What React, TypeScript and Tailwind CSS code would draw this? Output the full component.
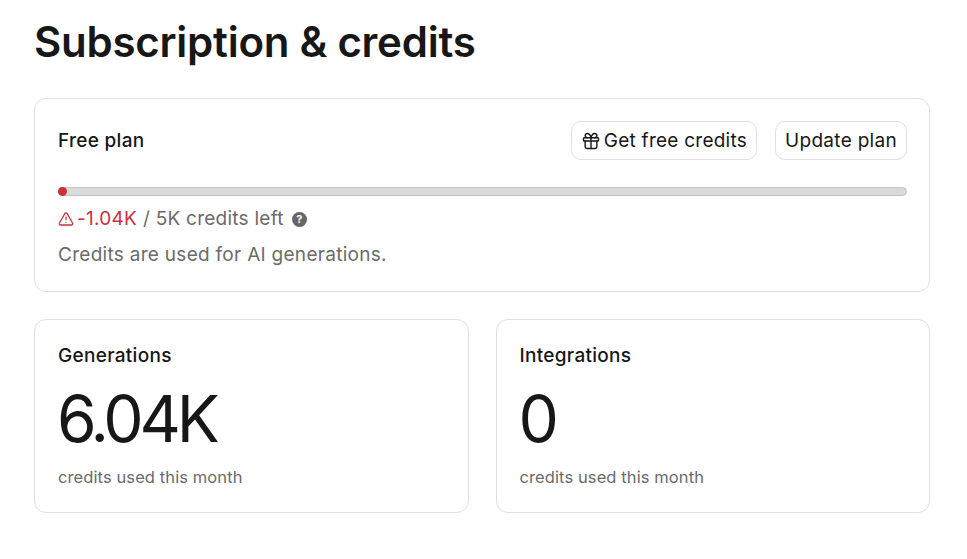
import { Gift, TriangleAlert } from 'lucide-react'

const StatCard = ({ title, value }: { title: string; value: string }) => (
    <div className="flex-1 h-[194px] rounded-xl border border-[#e0e0e0] px-[23px] pt-[23px]">
        <div className="text-[19px] leading-[26px] font-medium tracking-[0.3px] text-[#171717]">{title}</div>
        <div className="mt-[14px] -ml-[1px] text-[64px] leading-[72px] tracking-[-4.1px] text-[#171717]">{value}</div>
        <div className="mt-[10px] text-[16.5px] leading-6 tracking-[0.1px] text-[#6b6b6b]">credits used this month</div>
    </div>
)

const App = () => {
    return (
        <div className="h-[559px] w-[967px] overflow-hidden bg-white pl-[34px] pr-[37px] pt-[18px] font-['Inter',sans-serif]">
            <h1 className="text-[42px] leading-[48px] font-semibold tracking-[-0.25px] text-[#171717]">Subscription &amp; credits</h1>

            <div className="mt-[32px] h-[194px] rounded-xl border border-[#e0e0e0] pl-[23px] pr-[22px] pt-[22px]">
                <div className="flex items-center justify-between">
                    <div className="pt-px text-[19px] font-medium tracking-[0.3px] text-[#171717]">Free plan</div>
                    <div className="flex gap-[18px]">
                        <button className="flex h-[39px] items-center gap-[3px] rounded-[10px] border border-[#e0e0e0] px-[9px] pt-px text-[19px] tracking-[0.25px] text-[#171717]">
                            <Gift size={20} strokeWidth={1.7} />
                            Get free credits
                        </button>
                        <button className="flex h-[39px] items-center rounded-[10px] border border-[#e0e0e0] px-[9px] pt-px text-[19px] tracking-[0.3px] text-[#171717]">
                            Update plan
                        </button>
                    </div>
                </div>

                <div className="relative mt-[27px] h-[9px] rounded-full border border-[#c4c4c4] bg-[#dadada]">
                    <div className="absolute -left-px -top-px h-[9px] w-[9px] rounded-full bg-[#c9323c]" />
                </div>

                <div className="mt-[9px] flex items-center text-[19px] leading-[28px] tracking-[0.25px] text-[#6b6b6b]">
                    <TriangleAlert size={16} strokeWidth={1.9} className="mr-[3px] text-[#c9323c]" />
                    <span className="text-[#c9323c]">-1.04K</span>
                    <span className="ml-[6px]">/ 5K credits left</span>
                    <span className="ml-[8px] flex h-[15px] w-[15px] items-center justify-center rounded-full bg-[#666666] text-[11px] leading-none font-bold tracking-normal text-white">?</span>
                </div>
                <div className="mt-[8px] text-[19px] leading-[28px] tracking-[0.29px] text-[#6b6b6b]">Credits are used for AI generations.</div>
            </div>

            <div className="mt-[27px] flex gap-[27px]">
                <StatCard title="Generations" value="6.04K" />
                <StatCard title="Integrations" value="0" />
            </div>
        </div>
    )
}

export default App
